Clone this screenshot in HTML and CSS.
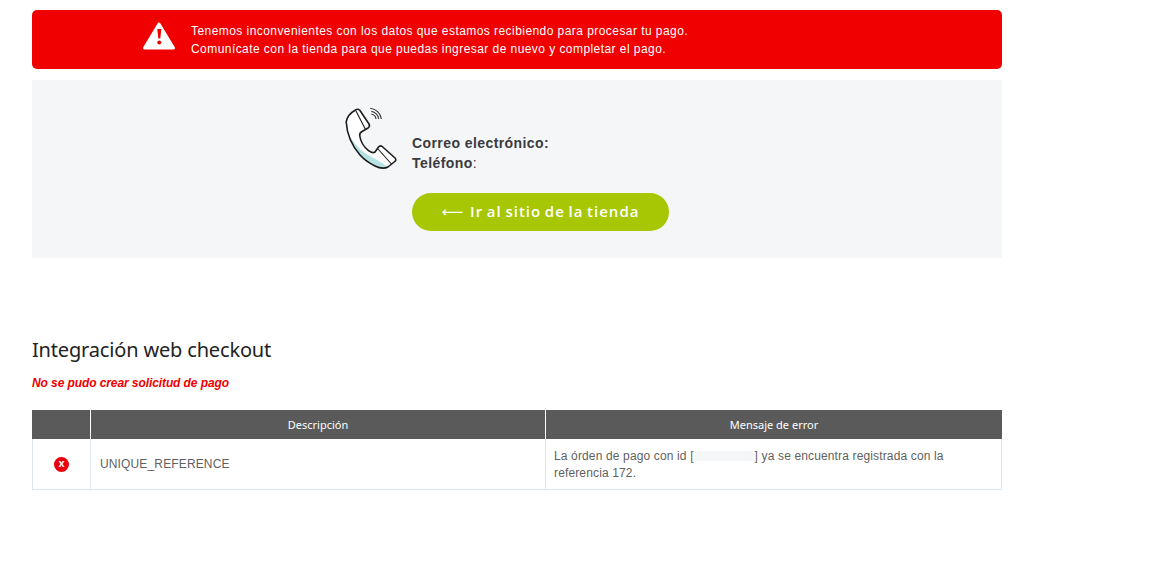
FILE: index.html
```
<!DOCTYPE html>
<html lang="es">
<head>
    <meta charset="UTF-8">
    <title>Integración web checkout</title>
    <link rel="stylesheet" href="styles.css">
</head>
<body>
    <div class="wrapper">
        <div class="alert">
            <svg class="alert-icon" width="34" height="30" viewBox="0 0 34 30">
                <path d="M17 3 L31.500 27 H2.500 Z" fill="#fff" stroke="#fff" stroke-width="3" stroke-linejoin="round"/>
                <path d="M15.300 8 H19.300 L18.300 17.500 H16.300 Z" fill="#f00000"/>
                <circle cx="17.300" cy="21.500" r="2" fill="#f00000"/>
            </svg>
            <p>Tenemos inconvenientes con los datos que estamos recibiendo para procesar tu pago.<br>Comunícate con la tienda para que puedas ingresar de nuevo y completar el pago.</p>
        </div>

        <div class="contact">
            <svg class="phone-icon" width="52" height="64" viewBox="0 0 52 64">
                <path d="M1.200 15 C2 10 6 5.500 10.500 3 C12 2.200 14 2 15 3.500 L24 17 C25 18.800 24.500 20 23 21 L17 24.500 C15 25.500 14.300 26.500 14.800 29 C15.500 34 19 40 23.500 43.700 C26 45.700 28.500 46 30 45 L33.500 40 C34.500 38.800 36 38.500 37.200 39.500 L50 51 C51.200 52.300 51 53.500 49.800 54.500 L43 60 C40 61.500 35 61.500 30 59 C24 56 19 52.500 15 48 C8 40 2 28 1.200 15 Z" fill="#fff"/>
                <path d="M4 28 C9 36 14 42 20 46 C27 50.500 35 54 43 60 C38 61.500 33.500 61 30 59 C24 56 19 52.500 15 48 C10 42.500 6 35 4 28 Z" fill="#b5e2e2"/>
                <path d="M1.200 15 C2 10 6 5.500 10.500 3 C12 2.200 14 2 15 3.500 L24 17 C25 18.800 24.500 20 23 21 L17 24.500 C15 25.500 14.300 26.500 14.800 29 C15.500 34 19 40 23.500 43.700 C26 45.700 28.500 46 30 45 L33.500 40 C34.500 38.800 36 38.500 37.200 39.500 L50 51 C51.200 52.300 51 53.500 49.800 54.500 L43 60 C40 61.500 35 61.500 30 59 C24 56 19 52.500 15 48 C8 40 2 28 1.200 15 Z" fill="none" stroke="#1c1c1c" stroke-width="1.600" stroke-linejoin="round"/>
                <path d="M11 4 L20.500 22.500 M33 42 L46.500 57" fill="none" stroke="#1c1c1c" stroke-width="1.100"/>
                <path d="M25.300 1.300 C31 2 36 6.500 36.300 12 M26.300 4.300 C30 5 33.500 8 33.700 12 M26.300 7 C28.500 7.500 30.800 9.500 31 12" fill="none" stroke="#333" stroke-width="1.100"/>
            </svg>
            <div class="contact-body">
                <div class="contact-info">
                    <div><b>Correo electrónico:</b></div>
                    <div><b>Teléfono</b>:</div>
                </div>
                <a class="store-btn" href="#"><span class="arrow">⟵</span>Ir al sitio de la tienda</a>
            </div>
        </div>

        <h2 class="title">Integración web checkout</h2>
        <p class="error-text">No se pudo crear solicitud de pago</p>

        <table class="errors">
            <thead>
                <tr>
                    <th class="col-icon"></th>
                    <th class="col-desc">Descripción</th>
                    <th>Mensaje de error</th>
                </tr>
            </thead>
            <tbody>
                <tr>
                    <td class="cell-icon"><span class="x-icon">x</span></td>
                    <td class="cell-name">UNIQUE_REFERENCE</td>
                    <td class="cell-msg">La órden de pago con id [<span class="masked"></span>] ya se encuentra registrada con la referencia 172.</td>
                </tr>
            </tbody>
        </table>
    </div>
</body>
</html>
```

FILE: styles.css
```
body {
    font-family: "Liberation Sans", Arial, sans-serif;
    margin: 0;
    padding: 0;
    color: #555;
    background: #fff;
}
.wrapper {
    width: 970px;
    margin-left: 32px;
    padding-top: 10px;
}
.alert {
    display: flex;
    align-items: center;
    height: 59px;
    padding-left: 110px;
    background: #f00000;
    border-radius: 5px;
    color: #fff;
}
.alert-icon {
    flex: none;
    margin-right: 15px;
    margin-bottom: 7px;
}
.alert p {
    margin: 0;
    font-size: 12px;
    line-height: 18px;
    letter-spacing: 0.44px;
}
.contact {
    display: flex;
    height: 178px;
    margin-top: 11px;
    padding: 27px 0 0 313px;
    box-sizing: border-box;
    background: #f5f6f8;
}
.phone-icon {
    flex: none;
    margin-right: 15px;
}
.contact-body {
    padding-top: 26px;
}
.contact-info {
    font-size: 14px;
    line-height: 20px;
    letter-spacing: 0.42px;
    color: #3a3a3f;
}
.store-btn {
    display: block;
    width: 257px;
    height: 38px;
    margin-top: 20px;
    border-radius: 19px;
    background: #a7c604;
    color: #fff;
    font-family: "Open Sans", sans-serif;
    font-size: 15px;
    font-weight: 600;
    line-height: 37px;
    letter-spacing: 1px;
    word-spacing: -1.2px;
    text-align: center;
    text-decoration: none;
}
.arrow {
    margin-right: 7px;
    font-family: "DejaVu Sans", sans-serif;
    font-weight: normal;
    letter-spacing: 0;
}
.title {
    margin: 80px 0 0;
    font-family: "Noto Sans", sans-serif;
    font-size: 20px;
    font-weight: 400;
    line-height: 24px;
    letter-spacing: -0.17px;
    color: #222;
}
.error-text {
    margin: 13px 0 0;
    font-size: 12px;
    line-height: 16px;
    font-weight: bold;
    font-style: italic;
    letter-spacing: -0.09px;
    color: #f00000;
}
.errors {
    width: 970px;
    margin-top: 19px;
    border-collapse: separate;
    border-spacing: 0;
    table-layout: fixed;
    font-size: 12px;
}
.errors th {
    height: 29px;
    padding: 0;
    background: #5a5a5a;
    border-left: 1px solid #fff;
    color: #fff;
    font-family: "Noto Sans", sans-serif;
    font-size: 11px;
    font-weight: 400;
    text-align: center;
}
.errors th:first-child {
    border-left: none;
}
.col-icon {
    width: 58px;
}
.col-desc {
    width: 454px;
}
.errors td {
    height: 51px;
    padding: 0 8px;
    box-sizing: border-box;
    border-left: 1px solid #dbe7ee;
    border-bottom: 1px solid #dbe7ee;
    line-height: 17px;
    letter-spacing: 0.14px;
    color: #5f5f5f;
}
.errors td:last-child {
    border-right: 1px solid #dbe7ee;
}
.errors .cell-icon {
    padding: 0;
    text-align: center;
}
.errors .cell-name {
    padding-left: 9px;
}
.errors .cell-msg {
    padding-top: 2px;
}
.x-icon {
    display: inline-block;
    width: 15px;
    height: 15px;
    border-radius: 50%;
    background: #e8000d;
    color: #fff;
    font-size: 11px;
    font-weight: bold;
    line-height: 13px;
    letter-spacing: 0;
    vertical-align: middle;
}
.masked {
    display: inline-block;
    width: 61px;
    height: 10px;
    background: #f5f6f8;
    vertical-align: -1px;
}
```
